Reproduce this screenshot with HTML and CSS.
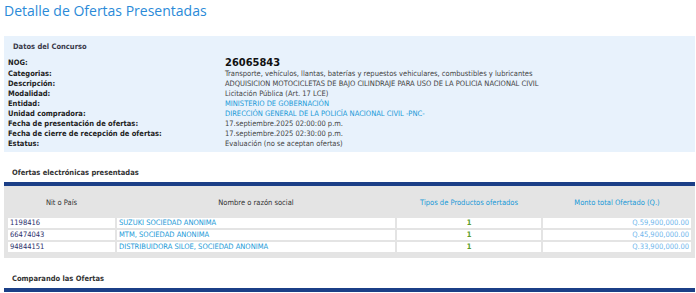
FILE: index.html
```html
<!DOCTYPE html>
<html lang="es">
<head>
  <meta charset="UTF-8">
  <title>Detalle de Ofertas Presentadas</title>
  <link rel="stylesheet" href="styles.css">
</head>
<body>
  <h1 class="page-title">Detalle de Ofertas Presentadas</h1>

  <div class="concurso-box">
    <h2 class="box-title">Datos del Concurso</h2>
    <table class="datos">
      <tr class="nog-row"><th>NOG:</th><td class="nog">26065843</td></tr>
      <tr><th>Categorias:</th><td>Transporte, vehículos, llantas, baterías y repuestos vehiculares, combustibles y lubricantes</td></tr>
      <tr><th>Descripción:</th><td>ADQUISICION MOTOCICLETAS DE BAJO CILINDRAJE PARA USO DE LA POLICIA NACIONAL CIVIL</td></tr>
      <tr><th>Modalidad:</th><td>Licitación Pública (Art. 17 LCE)</td></tr>
      <tr><th>Entidad:</th><td><a href="#">MINISTERIO DE GOBERNACIÓN</a></td></tr>
      <tr><th>Unidad compradora:</th><td><a href="#">DIRECCIÓN GENERAL DE LA POLICÍA NACIONAL CIVIL -PNC-</a></td></tr>
      <tr><th>Fecha de presentación de ofertas:</th><td>17.septiembre.2025 02:00:00 p.m.</td></tr>
      <tr><th>Fecha de cierre de recepción de ofertas:</th><td>17.septiembre.2025 02:30:00 p.m.</td></tr>
      <tr><th>Estatus:</th><td>Evaluación (no se aceptan ofertas)</td></tr>
    </table>
  </div>

  <h3 class="section-title">Ofertas electrónicas presentadas</h3>
  <div class="section-bar"></div>
  <table class="ofertas">
    <thead>
      <tr>
        <th class="col-nit">Nit o País</th>
        <th class="col-nombre">Nombre o razón social</th>
        <th class="col-tipos link-head">Tipos de Productos ofertados</th>
        <th class="col-monto link-head">Monto total Ofertado (Q.)</th>
      </tr>
    </thead>
    <tbody>
      <tr>
        <td class="nit">1198416</td>
        <td><a href="#">SUZUKI SOCIEDAD ANONIMA</a></td>
        <td class="tipos">1</td>
        <td class="monto">Q.59,900,000.00</td>
      </tr>
      <tr>
        <td class="nit">66474043</td>
        <td><a href="#">MTM, SOCIEDAD ANONIMA</a></td>
        <td class="tipos">1</td>
        <td class="monto">Q.45,900,000.00</td>
      </tr>
      <tr>
        <td class="nit">94844151</td>
        <td><a href="#">DISTRIBUIDORA SILOE, SOCIEDAD ANONIMA</a></td>
        <td class="tipos">1</td>
        <td class="monto">Q.33,900,000.00</td>
      </tr>
    </tbody>
  </table>

  <h3 class="section-title compare">Comparando las Ofertas</h3>
  <div class="section-bar"></div>
</body>
</html>
```

FILE: styles.css
```css
body {
  margin: 0;
  padding: 0 1px 0 4px;
  font-family: 'DejaVu Sans Condensed', 'DejaVu Sans', sans-serif;
  font-size: 7.5px;
  color: #333;
  background: #fff;
}

a {
  color: #1a9ad8;
  text-decoration: none;
}

.page-title {
  margin: 0;
  padding-top: 1px;
  height: 35px;
  font-family: 'Open Sans', sans-serif;
  font-weight: 400;
  font-size: 14px;
  color: #2a8ad8;
}

.concurso-box {
  background-color: #e8f2fc;
  padding: 6px 0 2px 4px;
  height: 108px;
}

.box-title {
  margin: 0 0 5px 5px;
  font-size: 7.5px;
  font-weight: bold;
  color: #3a3a4a;
}

.datos {
  border-collapse: collapse;
}

.datos th {
  text-align: left;
  font-weight: bold;
  color: #222;
  width: 217px;
  padding: 0;
  height: 10px;
  line-height: 10px;
}

.datos td {
  padding: 0;
  line-height: 10px;
  color: #444;
}

.datos .nog-row th,
.datos .nog-row td {
  height: 13px;
  line-height: 13px;
}

.datos .nog {
  font-size: 11px;
  font-weight: bold;
  color: #111;
}

.section-title {
  margin: 16px 0 0 8px;
  height: 14px;
  font-size: 7.5px;
  font-weight: bold;
  color: #333;
}

.section-bar {
  height: 4px;
  background-color: #1b3f87;
}

.ofertas {
  width: 100%;
  margin-top: 0;
  border-spacing: 2px;
  background-color: #e4e4e4;
  padding: 0 2px 4px 2px;
}

.ofertas th {
  height: 26px;
  font-weight: normal;
  color: #333;
}

.ofertas th.link-head {
  color: #1a9ad8;
}

.ofertas td {
  background-color: #fff;
  height: 10px;
  line-height: 10px;
  padding: 0 2px;
}

.col-nit { width: 105px; }
.col-nombre { width: 276px; }
.col-tipos { width: 142px; }

.ofertas .nit {
  color: #2b2f6b;
}

.ofertas .tipos {
  text-align: center;
  font-weight: bold;
  color: #5c9c2c;
}

.ofertas .monto {
  text-align: right;
  color: #6fb6ec;
}

.compare {
  margin-top: 16px;
}
```
